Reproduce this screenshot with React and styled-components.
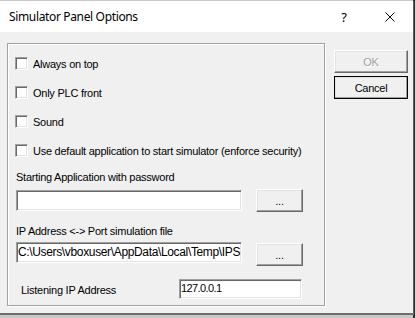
import React from "react";
import styled, { createGlobalStyle } from "styled-components";

const Global = createGlobalStyle`
  html, body {
    margin: 0;
    padding: 0;
    background: #c9c9c9;
  }
  body {
    width: 415px;
    height: 318px;
    overflow: hidden;
  }
`;

const Desk = styled.div`
  padding-top: 1px;
  height: 318px;
  box-sizing: border-box;
  background: linear-gradient(to right, #c9c9c9 0 413px, #2e2e2e 413px);
`;

const Window = styled.div`
  width: 414px;
  height: 314px;
  box-sizing: border-box;
  border-right: 1px solid #5e5e5e;
  border-bottom: 2px solid #6e6e6e;
  display: flex;
  flex-direction: column;
  background: #f0f0f0;
`;

const TitleBar = styled.div`
  height: 31px;
  flex: none;
  background: #fff;
  display: flex;
  align-items: center;
  padding-left: 9px;
  font-family: "Noto Sans", sans-serif;
  font-size: 12px;
  color: #000;
`;

const Title = styled.span`
  flex: 1;
  letter-spacing: -0.35px;
`;

const TitleButton = styled.span`
  width: 46px;
  display: flex;
  justify-content: center;
  align-items: center;
  font-size: 13px;
`;

const Body = styled.div`
  flex: 1;
  display: flex;
  align-items: flex-start;
  padding: 11px 0 0 7px;
  font-family: "Liberation Sans", Arial, sans-serif;
  font-size: 11px;
  letter-spacing: -0.25px;
  color: #000;
`;

const GroupBox = styled.div`
  width: 318px;
  height: 263px;
  box-sizing: border-box;
  border: 1px solid #a0a0a0;
  box-shadow: inset 1px 1px 0 #fff, 1px 1px 0 #fff;
  padding: 13px 0 0 7px;
  display: flex;
  flex-direction: column;
`;

const CheckList = styled.div`
  display: flex;
  flex-direction: column;
  gap: 16px;
`;

const CheckRow = styled.label`
  display: flex;
  align-items: center;
  height: 13px;
  gap: 5px;
`;

const Box = styled.span`
  width: 13px;
  height: 13px;
  box-sizing: border-box;
  background: #fff;
  border-style: solid;
  border-width: 1px;
  border-color: #a0a0a0 #fff #fff #a0a0a0;
  box-shadow: inset 1px 1px 0 #696969, inset -1px -1px 0 #e3e3e3;
  flex: none;
`;

const Caption = styled.div`
  line-height: 13px;
  margin-left: 1px;
  margin-top: ${(p) => p.$top}px;
`;

const FieldRow = styled.div`
  display: flex;
  align-items: flex-start;
  margin-top: ${(p) => p.$top}px;
  margin-left: 1px;
`;

const Field = styled.div`
  width: ${(p) => p.$w}px;
  height: ${(p) => p.$h || 21}px;
  box-sizing: border-box;
  background: #fff;
  border-style: solid;
  border-width: 1px;
  border-color: #a0a0a0 #fff #fff #a0a0a0;
  box-shadow: inset 1px 1px 0 #696969, inset -1px -1px 0 #e3e3e3;
  padding: 0 1px;
  margin-top: ${(p) => p.$top || 0}px;
  line-height: ${(p) => (p.$h || 21) - 3}px;
  white-space: nowrap;
  overflow: hidden;
  font-size: ${(p) => p.$size || 12}px;
  letter-spacing: ${(p) => p.$track || 0}px;
`;

const Button = styled.div`
  width: ${(p) => p.$w}px;
  height: 23px;
  box-sizing: border-box;
  background: #f0f0f0;
  border-style: solid;
  border-width: 1px;
  border-color: #fff #696969 #696969 #fff;
  box-shadow: inset -1px -1px 0 #a0a0a0, inset 1px 1px 0 #e3e3e3;
  display: flex;
  align-items: center;
  justify-content: center;
  color: ${(p) => (p.$disabled ? "#a0a0a0" : "#000")};
  text-shadow: ${(p) => (p.$disabled ? "1px 1px 0 #fff" : "none")};
  outline: ${(p) => (p.$default ? "1px solid #000" : "none")};
  outline-offset: -1px;
  margin-left: ${(p) => p.$left || 0}px;
  margin-top: ${(p) => p.$top || 0}px;
`;

const IpLabel = styled.div`
  width: 158px;
  padding-left: 5px;
  padding-top: 5px;
  line-height: 13px;
`;

const ButtonColumn = styled.div`
  display: flex;
  flex-direction: column;
  gap: 3px;
  margin-left: 9px;
  margin-top: 7px;
`;

const options = [
  "Always on top",
  "Only PLC front",
  "Sound",
  "Use default application to start simulator (enforce security)",
];

const CloseIcon = () => (
  <svg width="10" height="10" viewBox="0 0 10 10">
    <path d="M0.5 0.5 L9.5 9.5 M9.5 0.5 L0.5 9.5" stroke="#000" strokeWidth="1" />
  </svg>
);

export default function App() {
  return (
    <>
      <Global />
      <Desk>
        <Window>
          <TitleBar>
            <Title>Simulator Panel Options</Title>
            <TitleButton>?</TitleButton>
            <TitleButton>
              <CloseIcon />
            </TitleButton>
          </TitleBar>
          <Body>
            <GroupBox>
              <CheckList>
                {options.map((o) => (
                  <CheckRow key={o}>
                    <Box />
                    <span>{o}</span>
                  </CheckRow>
                ))}
              </CheckList>
              <Caption $top={14}>Starting Application with password</Caption>
              <FieldRow $top={5}>
                <Field $w={226} $top={1} />
                <Button $w={47} $left={14}>...</Button>
              </FieldRow>
              <Caption $top={13}>IP Address &lt;-&gt; Port simulation file</Caption>
              <FieldRow $top={4}>
                <Field $w={226} $track={-0.35}>C:\Users\vboxuser\AppData\Local\Temp\IPS</Field>
                <Button $w={47} $left={14} $top={1}>...</Button>
              </FieldRow>
              <FieldRow $top={13}>
                <IpLabel>Listening IP Address</IpLabel>
                <Field $w={123} $h={20} $size={11} $track={-0.6}>127.0.0.1</Field>
              </FieldRow>
            </GroupBox>
            <ButtonColumn>
              <Button $w={74} $disabled>OK</Button>
              <Button $w={74} $default>Cancel</Button>
            </ButtonColumn>
          </Body>
        </Window>
      </Desk>
    </>
  );
}
